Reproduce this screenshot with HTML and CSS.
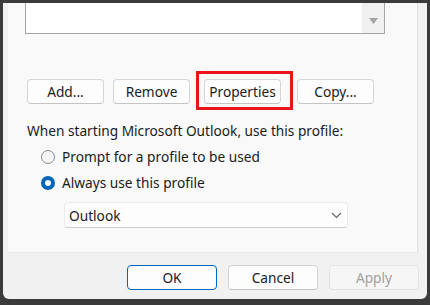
FILE: index.html
```html
<!DOCTYPE html>
<html lang="en">
<head>
    <meta charset="UTF-8">
    <title>Mail - Profiles</title>
    <link rel="stylesheet" href="styles.css">
</head>
<body>
    <div class="window">
        <div class="panel">
            <div class="listbox">
                <div class="scrollbar">
                    <svg width="9" height="6" viewBox="0 0 9 6"><path d="M0 0 H9 L4.5 6 Z" fill="#a3a3a3"/></svg>
                </div>
            </div>
            <div class="actions">
                <button class="btn btn-add">Add...</button>
                <button class="btn btn-remove">Remove</button>
                <span class="highlight"><button class="btn">Properties</button></span>
                <button class="btn btn-copy">Copy...</button>
            </div>
            <p class="label">When starting Microsoft Outlook, use this profile:</p>
            <label class="radio"><span class="dot"></span>Prompt for a profile to be used</label>
            <label class="radio"><span class="dot checked"></span>Always use this profile</label>
            <div class="select">
                <span>Outlook</span>
                <svg width="11" height="7" viewBox="0 0 11 7"><path d="M1 1 L5.5 5.5 L10 1" fill="none" stroke="#606060" stroke-width="1.1"/></svg>
            </div>
        </div>
        <div class="footer">
            <button class="btn btn-wide btn-default">OK</button>
            <button class="btn btn-wide">Cancel</button>
            <button class="btn btn-wide btn-disabled">Apply</button>
        </div>
    </div>
</body>
</html>
```

FILE: styles.css
```css
body {
    margin: 0;
    background-color: #3b3b3b;
    font-family: "Noto Sans", "Open Sans", sans-serif;
    font-size: 13.7px;
    color: #1b1b1b;
    height: 305px;
    overflow: hidden;
}
.window {
    margin: 3px 3px 0 3px;
    height: 296px;
    background: #f1f1f1;
    border-radius: 0 0 6px 6px;
    padding: 0 8px 0 5px;
    box-sizing: border-box;
}
.panel {
    height: 250px;
    margin-right: 1px;
    background: #f9f9f9;
    border-right: 1px solid #e2e2e2;
    border-bottom: 1px solid #e8e8e8;
    box-sizing: border-box;
    padding-left: 17px;
}
.listbox {
    width: 360px;
    height: 31px;
    background: #ffffff;
    border: 1px solid #a5a5a5;
    border-top: none;
    box-sizing: border-box;
    display: flex;
    justify-content: flex-end;
}
.scrollbar {
    width: 22px;
    background: #f0f0f0;
    display: flex;
    align-items: flex-start;
    justify-content: center;
    padding-top: 15px;
    box-sizing: border-box;
}
.actions {
    display: flex;
    align-items: flex-start;
    margin-top: 45px;
    padding-left: 2px;
}
.btn {
    width: 77px;
    height: 25px;
    flex-shrink: 0;
    background: #fdfdfd;
    border: 1px solid #d6d6d6;
    border-bottom-color: #c4c4c4;
    border-radius: 4px;
    font-family: inherit;
    font-size: 13.7px;
    color: #1b1b1b;
    padding: 0;
}
.btn-add { margin-right: 9px; }
.highlight {
    display: flex;
    border: 3px solid #e8161b;
    padding: 5px 9px 3px 5px;
    margin: -8px 0 -6px 6px;
}
.btn-copy { margin-left: 4px; }
.label {
    margin: 19px 0 0 2px;
    line-height: 16px;
}
.radio {
    display: flex;
    align-items: center;
    margin: 10px 0 0 16px;
    line-height: 16px;
}
.dot {
    width: 12px;
    height: 12px;
    border: 1px solid #8a8a8a;
    border-radius: 50%;
    background: #f4f4f4;
    margin-right: 7px;
}
.dot.checked {
    width: 6px;
    height: 6px;
    border: 4px solid #0066b8;
    background: #ffffff;
}
.select {
    width: 284px;
    height: 26px;
    margin: 11px 0 0 39px;
    background: #fdfdfd;
    border: 1px solid #ececec;
    border-bottom-color: #cfcfcf;
    border-radius: 4px;
    box-sizing: border-box;
    display: flex;
    align-items: center;
    justify-content: space-between;
    padding: 0 5px 0 4px;
}
.footer {
    display: flex;
    justify-content: flex-end;
    gap: 11px;
    padding-top: 12px;
}
.btn-wide { width: 90px; }
.btn-default { border: 1px solid #0067c0; }
.btn-disabled {
    color: #a0a0a0;
    background: #f6f6f6;
    border-color: #e3e3e3;
}
```
